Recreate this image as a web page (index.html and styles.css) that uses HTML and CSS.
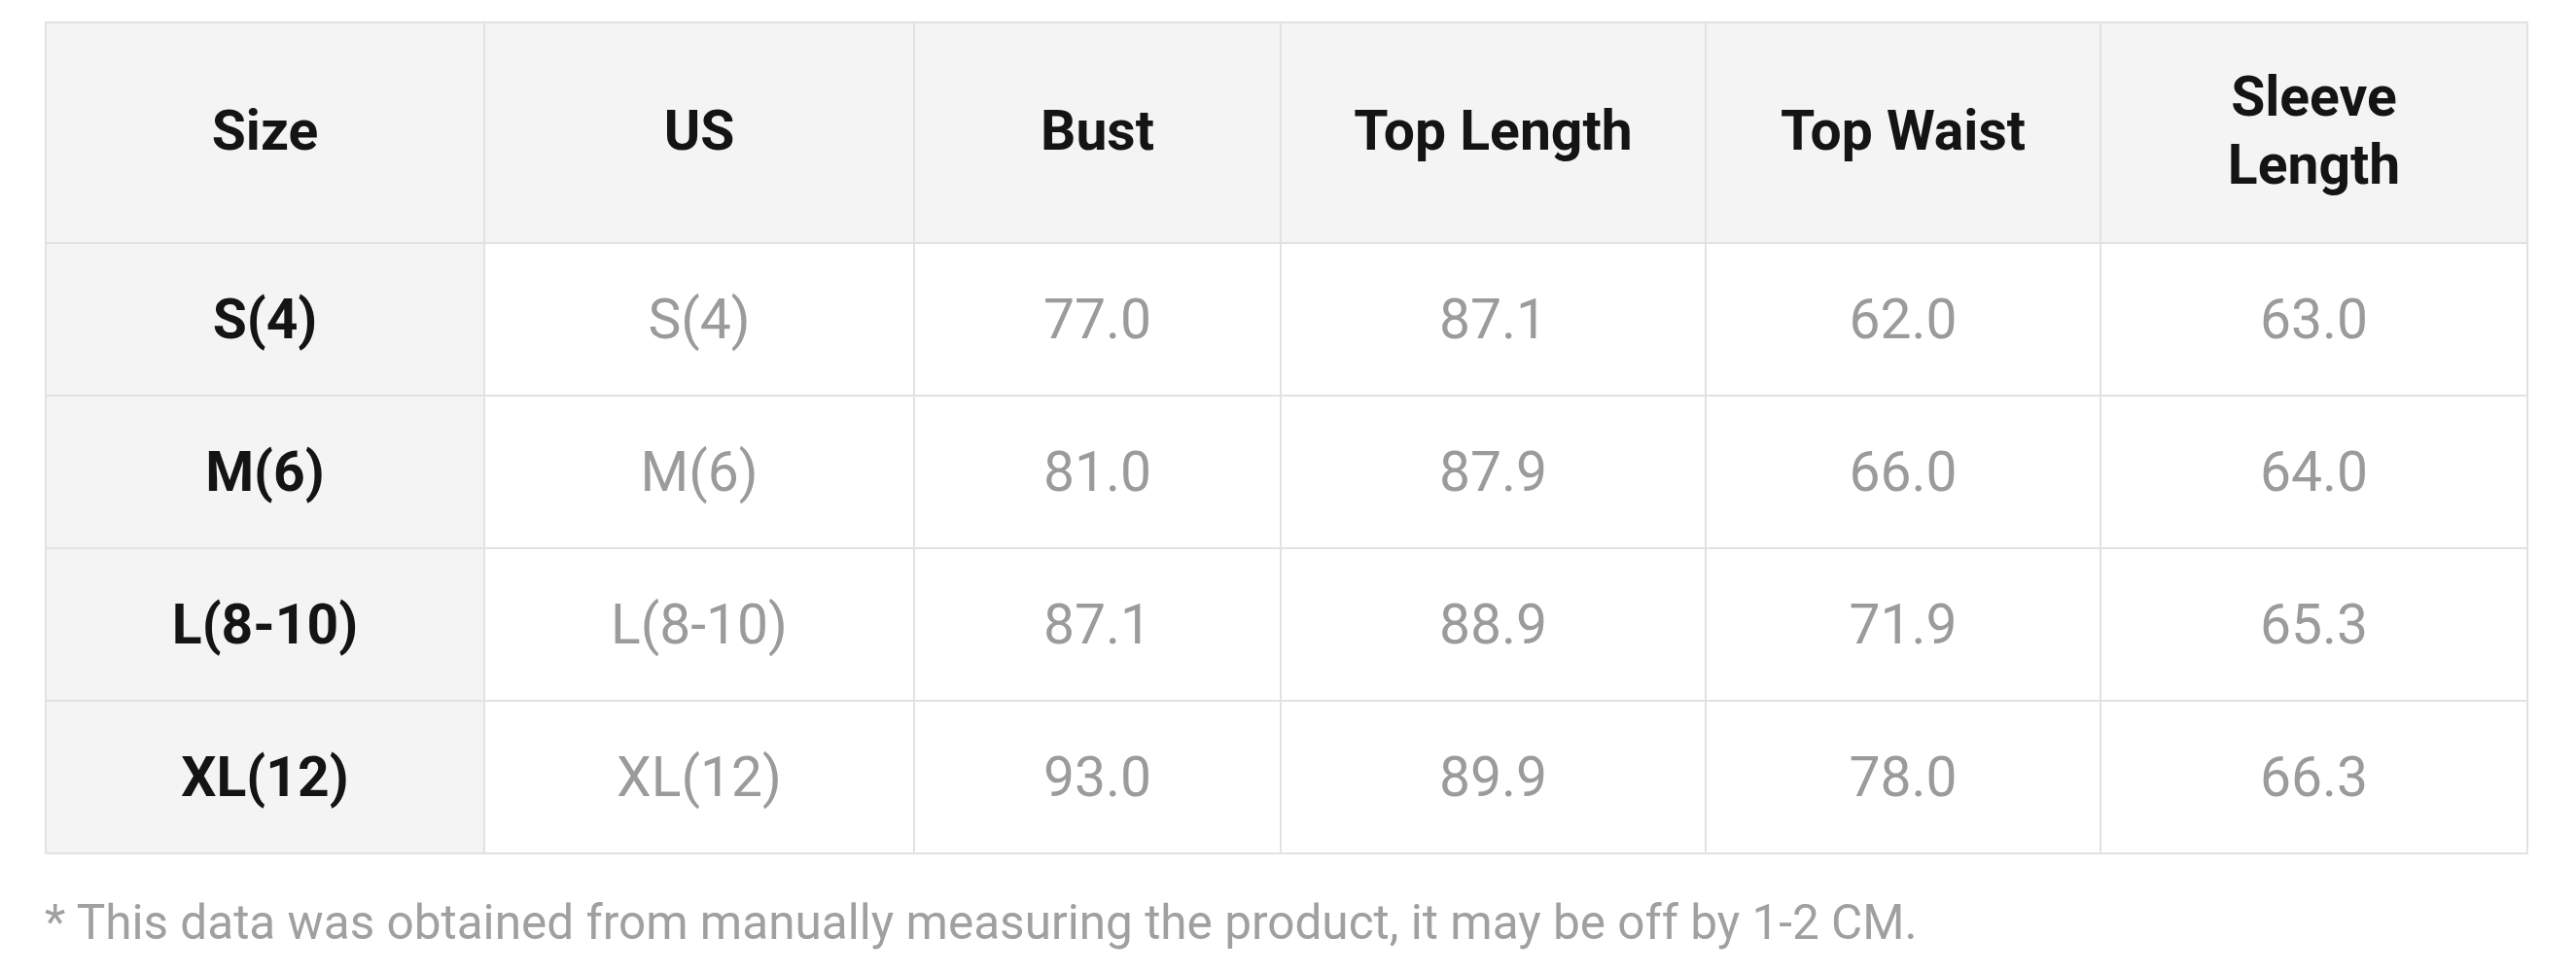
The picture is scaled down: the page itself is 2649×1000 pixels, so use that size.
FILE: index.html
```html
<!DOCTYPE html>
<html lang="en">
<head>
<meta charset="utf-8">
<title>Size Chart</title>
<link rel="stylesheet" href="styles.css">
</head>
<body>
<div class="page">
  <table class="size-table">
    <colgroup>
      <col class="c-size">
      <col class="c-us">
      <col class="c-bust">
      <col class="c-toplen">
      <col class="c-waist">
      <col class="c-sleeve">
    </colgroup>
    <thead>
      <tr>
        <th>Size</th>
        <th>US</th>
        <th>Bust</th>
        <th>Top Length</th>
        <th>Top Waist</th>
        <th>Sleeve<br>Length</th>
      </tr>
    </thead>
    <tbody>
      <tr><th>S(4)</th><td>S(4)</td><td>77.0</td><td>87.1</td><td>62.0</td><td>63.0</td></tr>
      <tr><th>M(6)</th><td>M(6)</td><td>81.0</td><td>87.9</td><td>66.0</td><td>64.0</td></tr>
      <tr><th>L(8-10)</th><td>L(8-10)</td><td>87.1</td><td>88.9</td><td>71.9</td><td>65.3</td></tr>
      <tr><th>XL(12)</th><td>XL(12)</td><td>93.0</td><td>89.9</td><td>78.0</td><td>66.3</td></tr>
    </tbody>
  </table>
  <p class="note">* This data was obtained from manually measuring the product, it may be off by 1-2 CM.</p>
</div>
</body>
</html>
```

FILE: styles.css
```css
html, body {
  margin: 0;
  padding: 0;
  background: #ffffff;
}

.page {
  padding: 22px 0 0 46px;
  font-family: Roboto, "Liberation Sans", Arial, sans-serif;
}

.size-table {
  border-collapse: collapse;
  table-layout: fixed;
  width: 2552px;
}

.c-size   { width: 451px; }
.c-us     { width: 442px; }
.c-bust   { width: 377px; }
.c-toplen { width: 437px; }
.c-waist  { width: 406px; }
.c-sleeve { width: 439px; }

.size-table th,
.size-table td {
  border: 2px solid #e2e2e2;
  text-align: center;
  vertical-align: middle;
  padding: 0;
  font-size: 57px;
  line-height: 70px;
}

.size-table thead th {
  height: 221px;
  padding-bottom: 4px;
  background: #f4f4f4;
  color: #141414;
  font-weight: 700;
}

.size-table tbody th {
  background: #f4f4f4;
  color: #141414;
  font-weight: 700;
}

.size-table tbody tr {
  height: 157px;
}

.size-table tbody td {
  background: #ffffff;
  color: #9b9b9b;
  font-weight: 400;
}

.note {
  margin: 41px 0 0 0;
  font-size: 49.5px;
  line-height: 58px;
  color: #a0a0a0;
}
```
